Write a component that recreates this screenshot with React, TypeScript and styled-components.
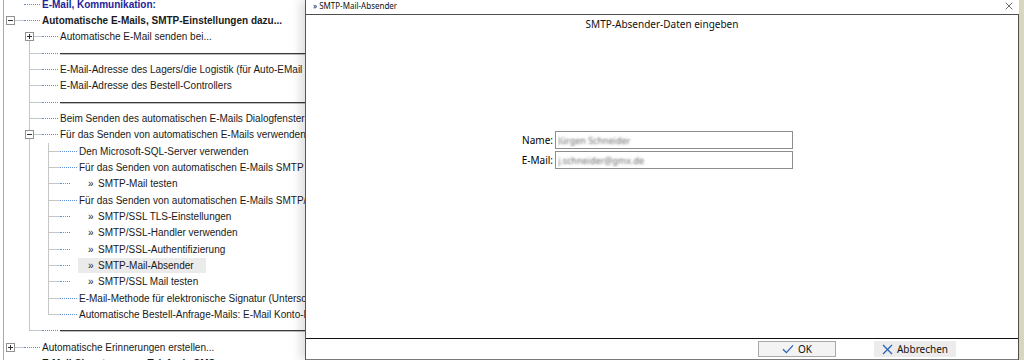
import React from 'react'
import styled, { createGlobalStyle } from 'styled-components'

const GlobalStyle = createGlobalStyle`
  html, body {
    margin: 0;
    padding: 0;
  }
  body {
    width: 1024px;
    height: 360px;
    overflow: hidden;
    background: #d8d7c2;
    font-family: "Liberation Sans", Arial, sans-serif;
  }
`

type VLine = 'none' | 'full' | 'top' | 'bottom'

interface TreeNode {
  level: 0 | 1 | 2
  kind?: 'text' | 'sep' | 'arrow'
  text?: string
  toggle?: '+' | '-'
  bold?: boolean
  blue?: boolean
  selected?: boolean
  first?: boolean
  last?: boolean
  plain?: boolean
}

const nodes: TreeNode[] = [
  { level: 0, text: 'E-Mail, Kommunikation:', bold: true, blue: true, plain: true },
  { level: 0, text: 'Automatische E-Mails, SMTP-Einstellungen dazu...', bold: true, toggle: '-' },
  { level: 1, text: 'Automatische E-Mail senden bei...', toggle: '+', first: true },
  { level: 1, kind: 'sep' },
  { level: 1, text: 'E-Mail-Adresse des Lagers/die Logistik (für Auto-EMail zur Bestellung)' },
  { level: 1, text: 'E-Mail-Adresse des Bestell-Controllers' },
  { level: 1, kind: 'sep' },
  { level: 1, text: 'Beim Senden des automatischen E-Mails Dialogfenster anzeigen' },
  { level: 1, text: 'Für das Senden von automatischen E-Mails verwenden:', toggle: '-' },
  { level: 2, text: 'Den Microsoft-SQL-Server verwenden' },
  { level: 2, text: 'Für das Senden von automatischen E-Mails SMTP verwenden' },
  { level: 2, kind: 'arrow', text: 'SMTP-Mail testen' },
  { level: 2, text: 'Für das Senden von automatischen E-Mails SMTP/SSL verwenden' },
  { level: 2, kind: 'arrow', text: 'SMTP/SSL TLS-Einstellungen' },
  { level: 2, kind: 'arrow', text: 'SMTP/SSL-Handler verwenden' },
  { level: 2, kind: 'arrow', text: 'SMTP/SSL-Authentifizierung' },
  { level: 2, kind: 'arrow', text: 'SMTP-Mail-Absender', selected: true },
  { level: 2, kind: 'arrow', text: 'SMTP/SSL Mail testen' },
  { level: 2, text: 'E-Mail-Methode für elektronische Signatur (Unterschrift)' },
  { level: 2, text: 'Automatische Bestell-Anfrage-Mails: E-Mail Konto-Daten', last: true },
  { level: 1, kind: 'sep', last: true },
  { level: 0, text: 'Automatische Erinnerungen erstellen...', toggle: '+' },
  { level: 0, text: 'E-Mail-Signaturen zur Telefonie SMS', bold: true, plain: true },
]

const ToggleBox: React.FC<{ open: boolean }> = ({ open }) => (
  <svg width="9" height="9" viewBox="0 0 9 9" style={{ flex: 'none' }}>
    <rect x="0.5" y="0.5" width="8" height="8" fill="#fff" stroke="#919191" />
    <path d="M2 4.5h5" stroke="#303030" />
    {!open && <path d="M4.5 2v5" stroke="#303030" />}
  </svg>
)

const Connector: React.FC<{ w: number; c: number; v: VLine; h?: boolean; toggle?: '+' | '-' }> = ({ w, c, v, h, toggle }) => (
  <Cell $w={w} $c={c} $v={v}>
    {toggle ? (
      <>
        <Gap $w={c - 4} />
        <ToggleBox open={toggle === '-'} />
        <HLine />
      </>
    ) : h ? (
      <>
        <Gap $w={c} />
        <HLine />
      </>
    ) : null}
  </Cell>
)

const TreeRow: React.FC<{ node: TreeNode }> = ({ node }) => {
  const { level, kind = 'text' } = node
  let dots = 16
  if (level === 2) dots = kind === 'arrow' ? 10 : 17

  return (
    <Row>
      {level === 0 && <Connector w={20} c={6} v="none" h={!node.plain} toggle={node.toggle} />}
      {level === 1 && (
        <>
          <Gap $w={20} />
          <Connector w={18} c={5} v={node.first ? 'bottom' : node.last ? 'top' : 'full'} h toggle={node.toggle} />
        </>
      )}
      {level === 2 && (
        <>
          <Gap $w={20} />
          <Connector w={18} c={5} v="full" />
          <Connector w={18} c={6} v={node.last ? 'top' : 'full'} h />
        </>
      )}
      <Dots $w={dots} />
      {kind === 'sep' && <SepLine />}
      {kind === 'text' && (
        <Label $bold={node.bold} $blue={node.blue}>
          {node.text}
        </Label>
      )}
      {kind === 'arrow' && (
        <ArrowItem $selected={node.selected}>
          <Chevron>»</Chevron>
          {node.text}
        </ArrowItem>
      )}
    </Row>
  )
}

const CheckIcon = () => (
  <svg width="12" height="10" viewBox="0 0 12 10">
    <path d="M1 5.2 L4.4 8.6 L11 1.4" fill="none" stroke="#2a62b5" strokeWidth="1.3" />
  </svg>
)

const CrossIcon: React.FC<{ size?: number; color?: string; stroke?: number }> = ({ size = 11, color = '#2a62b5', stroke = 1.3 }) => (
  <svg width={size} height={size} viewBox="0 0 11 11">
    <path d="M1 1 L10 10 M10 1 L1 10" fill="none" stroke={color} strokeWidth={stroke} />
  </svg>
)

export default function App() {
  return (
    <>
      <GlobalStyle />
      <Page>
        <Tree>
          <TreeList>
            {nodes.map((n, i) => (
              <TreeRow key={i} node={n} />
            ))}
          </TreeList>
        </Tree>

        <Window>
          <TitleBar>
            <TitleText>» SMTP-Mail-Absender</TitleText>
            <CloseButton>
              <CrossIcon size={8} color="#333" stroke={1} />
            </CloseButton>
          </TitleBar>
          <Frame>
            <Panel>
              <Heading>SMTP-Absender-Daten eingeben</Heading>
              <Form>
                <FieldLabel>Name:</FieldLabel>
                <Field readOnly defaultValue="Jürgen Schneider" />
                <FieldLabel>E-Mail:</FieldLabel>
                <Field readOnly defaultValue="j.schneider@gmx.de" />
              </Form>
            </Panel>
            <ButtonBar>
              <DialogButton $outlined>
                <CheckIcon />
                OK
              </DialogButton>
              <DialogButton>
                <CrossIcon />
                Abbrechen
              </DialogButton>
            </ButtonBar>
          </Frame>
        </Window>
      </Page>
    </>
  )
}

const Page = styled.div`
  position: relative;
  width: 1024px;
  height: 360px;
  overflow: hidden;
`

const Tree = styled.div`
  width: 1019px;
  height: 360px;
  padding-left: 3px;
  box-sizing: border-box;
  background: #fff;
  overflow: hidden;
`

const TreeList = styled.div`
  display: flex;
  flex-direction: column;
  margin-top: -4px;
  border-left: 1px solid #a9a9a9;
  min-height: 370px;
`

const Row = styled.div`
  display: flex;
  align-items: center;
  height: 16.33px;
  flex: none;
`

const Cell = styled.div<{ $w: number; $c: number; $v: VLine }>`
  flex: none;
  width: ${p => p.$w}px;
  align-self: stretch;
  display: flex;
  align-items: center;
  background-image: ${p => (p.$v === 'none' ? 'none' : 'linear-gradient(#c6c6c6, #c6c6c6)')};
  background-repeat: no-repeat;
  background-size: 1px ${p => (p.$v === 'full' ? '100%' : '50%')};
  background-position: ${p => p.$c}px ${p => (p.$v === 'bottom' ? '100%' : '0')};
`

const Gap = styled.div<{ $w: number }>`
  flex: none;
  width: ${p => p.$w}px;
`

const HLine = styled.div`
  flex: 1;
  height: 1px;
  background: #c6c6c6;
`

const Dots = styled.div<{ $w: number }>`
  flex: none;
  width: ${p => p.$w}px;
  height: 0;
  border-top: 1px dotted #5b8fd6;
  margin-right: 2px;
`

const SepLine = styled.div`
  flex: 1;
  height: 1px;
  background: #3a3a3a;
  box-shadow: 0 1px 0 #bdbdbd;
`

const Label = styled.span<{ $bold?: boolean; $blue?: boolean }>`
  white-space: nowrap;
  font-size: 10px;
  font-weight: ${p => (p.$bold ? 700 : 400)};
  color: ${p => (p.$blue ? '#23239c' : '#1a1a1a')};
`

const ArrowItem = styled.span<{ $selected?: boolean }>`
  display: flex;
  align-items: center;
  height: 15px;
  margin-left: 6px;
  padding: 0 12px 0 10px;
  white-space: nowrap;
  font-size: 10px;
  color: #1a1a1a;
  background: ${p => (p.$selected ? '#ebebeb' : 'transparent')};
`

const Chevron = styled.span`
  display: inline-block;
  width: 10px;
`

const Window = styled.div`
  position: absolute;
  left: 305px;
  top: 0;
  width: 714px;
  height: 360px;
  display: flex;
  flex-direction: column;
  background: #fff;
  border-left: 1px solid #565656;
  box-sizing: border-box;
  box-shadow: -5px 0 9px rgba(0, 0, 0, 0.13);
  font-family: "Noto Sans", "Open Sans", sans-serif;
  color: #111;
`

const TitleBar = styled.div`
  flex: none;
  height: 14px;
  display: flex;
  align-items: flex-start;
  justify-content: space-between;
  padding: 1px 6px 0 7px;
  box-sizing: border-box;
`

const TitleText = styled.span`
  font-size: 8px;
  line-height: 10px;
`

const CloseButton = styled.span`
  display: flex;
  padding-top: 1px;
`

const Frame = styled.div`
  flex: 1;
  display: flex;
  flex-direction: column;
  border-top: 1px solid #4f4f4f;
  border-right: 1px solid #4f4f4f;
`

const Panel = styled.div`
  flex: 1;
  border-bottom: 1px solid #111;
`

const Heading = styled.div`
  padding-top: 1px;
  text-align: center;
  font-size: 10px;
  line-height: 16px;
`

const Form = styled.div`
  display: grid;
  grid-template-columns: 247px 238px;
  grid-auto-rows: 18px;
  column-gap: 2px;
  row-gap: 2px;
  align-items: center;
  margin-top: 99px;
`

const FieldLabel = styled.label`
  text-align: right;
  font-size: 10px;
  color: #000;
`

const Field = styled.input`
  width: 100%;
  height: 18px;
  box-sizing: border-box;
  margin: 0;
  padding: 0 2px;
  border: 1px solid #8d8d8d;
  outline: none;
  background: #fff;
  font-family: "Noto Sans", sans-serif;
  font-size: 9px;
  color: transparent;
  text-shadow: 0 0 2.4px rgba(0, 0, 0, 0.6);
`

const ButtonBar = styled.div`
  flex: none;
  height: 21px;
  box-sizing: border-box;
  display: flex;
  align-items: center;
  justify-content: flex-end;
  gap: 38px;
  padding-right: 62px;
  border-bottom: 1px solid #7a7a7a;
`

const DialogButton = styled.button<{ $outlined?: boolean }>`
  display: flex;
  align-items: center;
  justify-content: center;
  gap: 4px;
  width: ${p => (p.$outlined ? 78 : 82)}px;
  height: 16px;
  margin: 0;
  padding: 0;
  box-sizing: border-box;
  border: 1px solid ${p => (p.$outlined ? '#a9a9a9' : '#ececec')};
  background: ${p => (p.$outlined ? '#f3f3f3' : '#ececec')};
  font-family: "Noto Sans", sans-serif;
  font-size: 10px;
  color: #111;
`
